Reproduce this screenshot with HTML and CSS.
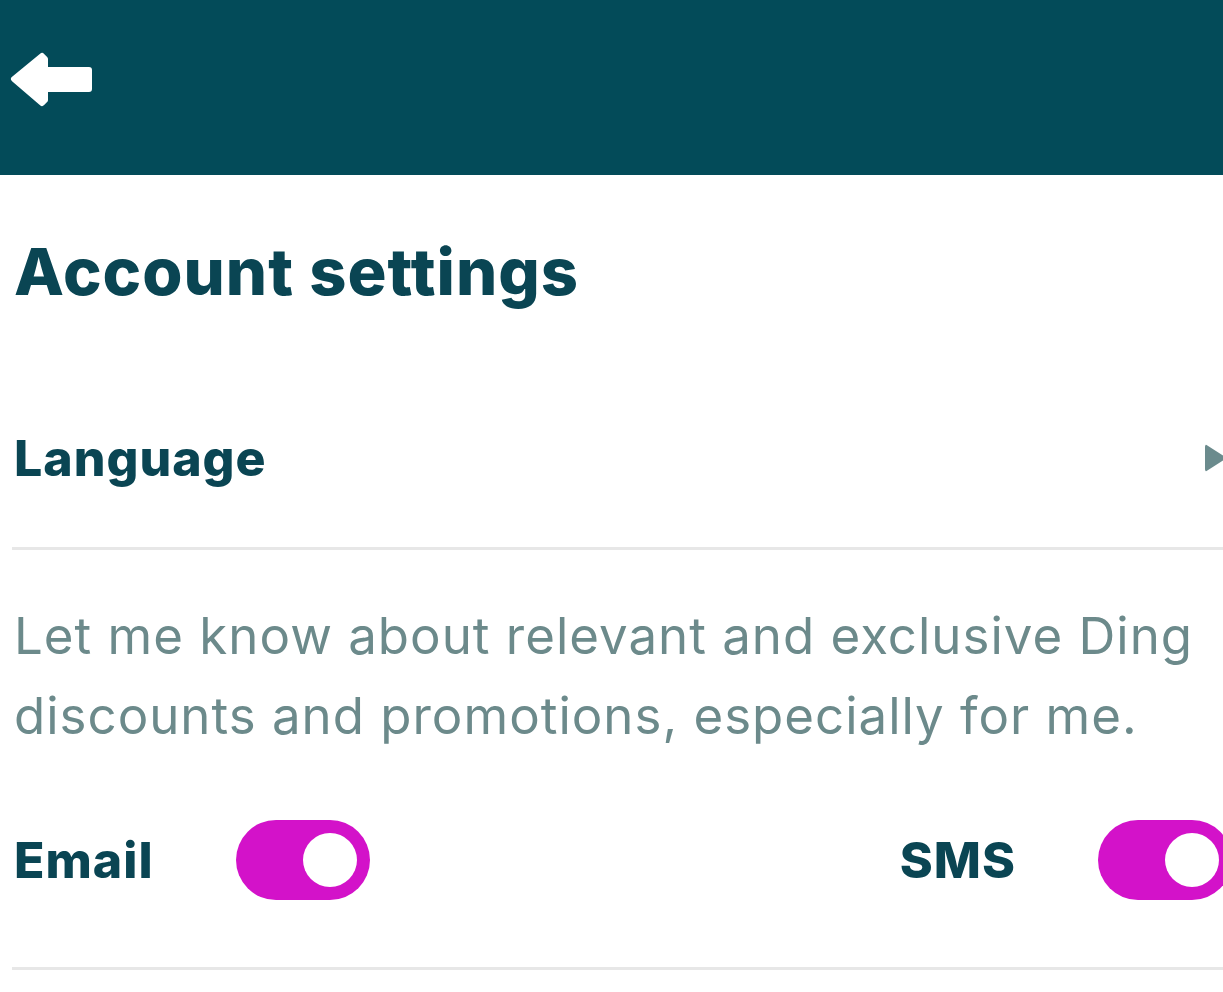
FILE: index.html
```html
<!DOCTYPE html>
<html lang="en">
<head>
<meta charset="utf-8">
<title>Account settings</title>
<link rel="stylesheet" href="styles.css">
</head>
<body>
<header class="topbar">
  <button class="back" aria-label="Back">
    <svg class="back-icon" width="84" height="56" viewBox="0 0 84 56">
      <path d="M4 27 L32 4 L35 7 L35 18 L79 18 L79 37 L35 37 L35 48 L32 51 Z" fill="#fff" stroke="#fff" stroke-width="6" stroke-linejoin="round"/>
    </svg>
  </button>
</header>
<main class="content">
  <h1 class="title">Account settings</h1>
  <div class="row lang-row">
    <span class="row-label">Language</span>
    <span class="chevron"></span>
  </div>
  <div class="divider"></div>
  <p class="desc">Let me know about relevant and exclusive Ding discounts and promotions, especially for me.</p>
  <div class="toggles">
    <div class="toggle-item">
      <span class="row-label">Email</span>
      <span class="switch"><span class="knob"></span></span>
    </div>
    <div class="toggle-item">
      <span class="row-label">SMS</span>
      <span class="switch"><span class="knob"></span></span>
    </div>
  </div>
  <div class="divider"></div>
</main>
</body>
</html>
```
FILE: styles.css
```css
html, body {
  margin: 0;
  padding: 0;
  background: #ffffff;
  overflow: hidden;
}
body {
  width: 1223px;
  height: 992px;
  font-family: Inter, "Liberation Sans", sans-serif;
  color: #0a4553;
}
.topbar {
  height: 175px;
  background: #034b59;
  display: flex;
  align-items: flex-start;
}
.back {
  margin: 52px 0 0 10px;
  padding: 0;
  border: 0;
  background: none;
  display: flex;
}
.content {
  width: 1232px;
  padding-left: 12px;
  box-sizing: border-box;
}
.title {
  margin: 64px 0 0 2px;
  font-size: 65px;
  line-height: 1;
  font-weight: 800;
  letter-spacing: 1px;
}
.row {
  display: flex;
  align-items: center;
  justify-content: space-between;
}
.lang-row {
  height: 178px;
  margin-top: 65px;
}
.row-label {
  font-size: 50px;
  font-weight: 800;
  line-height: 1;
  letter-spacing: 1px;
  padding-left: 2px;
}
.chevron {
  width: 0;
  height: 0;
  margin-right: 5px;
  border-top: 14px solid transparent;
  border-bottom: 14px solid transparent;
  border-left: 22px solid #6b8b8d;
  border-radius: 3px;
}
.divider {
  height: 3px;
  background: #e7e7e7;
}
.desc {
  margin: 46px 0 0 2px;
  font-size: 51px;
  line-height: 80px;
  font-weight: 400;
  letter-spacing: 1px;
  color: #6c8a8b;
  width: 1210px;
}
.toggles {
  display: flex;
  justify-content: space-between;
  margin-top: 64px;
  height: 147px;
  align-items: flex-start;
}
.toggle-item {
  display: flex;
  align-items: center;
  height: 80px;
}
.toggle-item .switch {
  margin-left: 82px;
}
.switch {
  width: 134px;
  height: 80px;
  border-radius: 40px;
  background: #d312c9;
  display: flex;
  align-items: center;
  justify-content: flex-end;
  padding-right: 13px;
  box-sizing: border-box;
}
.knob {
  width: 54px;
  height: 54px;
  border-radius: 50%;
  background: #ffffff;
}
```
